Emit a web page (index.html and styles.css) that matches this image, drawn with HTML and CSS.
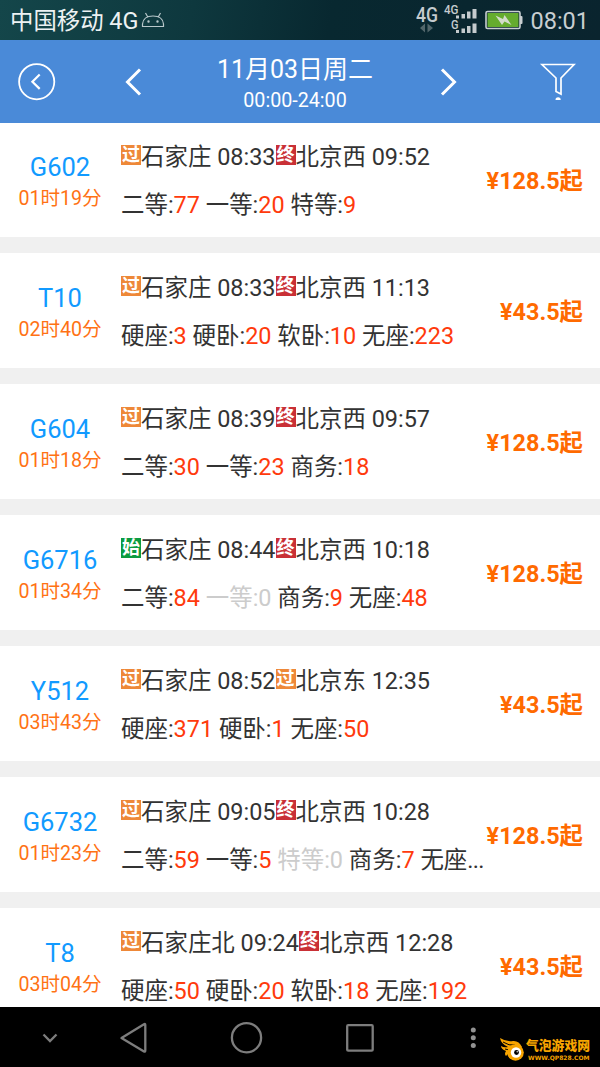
FILE: index.html
```
<!DOCTYPE html>
<html lang="zh-CN">
<head>
<meta charset="utf-8">
<title>车次列表</title>
<link rel="stylesheet" href="styles.css">
</head>
<body>
<div class="screen">
  <div class="status">
    <span class="carrier">中国移动 4G</span>
    <svg class="droid" width="24" height="18" viewBox="0 0 24 18" fill="none" stroke="#b9c8cb" stroke-width="1.2"><path d="M1.500 15.500V13C2 8 6 5 12 5S22 8 22.500 13V15.500ZM6.500 5.500L4.500 2M17.500 5.500L19.500 2"/><circle cx="7.500" cy="10.500" r=".6"/><circle cx="16.500" cy="10.500" r=".6"/></svg>
    <svg class="signal" width="64" height="40" viewBox="0 0 64 40" fill="#c5cbce">
      <g font-family="Roboto, sans-serif" font-weight="500"><text x="1" y="22" font-size="20" textLength="22" lengthAdjust="spacingAndGlyphs">4G</text><text x="29" y="14" font-size="12" textLength="14.500" lengthAdjust="spacingAndGlyphs">4G</text><text x="36" y="28.500" font-size="12" textLength="7.500" lengthAdjust="spacingAndGlyphs">G</text></g>
      <path fill="#52666b" d="M5 28L10 23.500V32.500ZM12.500 23.500V32.500L18 28Z"/>
      <path d="M41 15.500h3v3h-3zM46.500 14h3.500v4.500h-3.500zM52 11.500h3.500v7H52zM57.500 9H61.500v9.500h-4zM41 30h3v3h-3zM46.500 28.500h3.500v4.500h-3.500zM52 26h3.500v7H52zM57.500 23.500H61.500V33h-4z"/>
    </svg>
    <svg class="battery" width="38" height="20" viewBox="0 0 38 20"><rect x="1" y="1.500" width="34" height="17" rx="1.500" fill="#0b2730" stroke="#c8ced0" stroke-width="1.600"/><rect x="2.500" y="3" width="31" height="14" fill="#65ac2e"/><path d="M35 6h1.500q1 0 1 1v6q0 1-1 1H35z" fill="#c8ced0"/><path d="M10.500 5.500L18 9L19.500 5L26.500 15L19.500 11.500L17 15Z" fill="#d3dccb"/></svg>
    <span class="clock">08:01</span>
  </div>

  <div class="header">
    <svg class="back" width="38" height="38" viewBox="0 0 38 38" fill="none" stroke="#fff"><circle cx="18.700" cy="18.700" r="17.600" stroke-width="1.800"/><path d="M21.700 11.500L14.400 18.700L21.700 25.900" stroke-width="2.200"/></svg>
    <svg class="prev" width="18" height="28" viewBox="0 0 18 28" fill="none" stroke="#fff" stroke-width="3"><path d="M16 1.500L3.500 14L16 26.500"/></svg>
    <div class="date"><div class="day">11月03日周二</div><div class="hours">00:00-24:00</div></div>
    <svg class="next" width="18" height="28" viewBox="0 0 18 28" fill="none" stroke="#fff" stroke-width="3"><path d="M2 1.500L14.500 14L2 26.500"/></svg>
    <svg class="filter" width="38" height="40" viewBox="0 0 38 40" fill="none" stroke="#fff" stroke-width="1.700"><path d="M3 2.500H35L22 16V32L17 29.500V16Z"/><path d="M16.500 38Q16.500 35.300 19.100 35.300T21.700 38Z" fill="#fff" stroke="none"/></svg>
  </div>

  <div class="list">
    <div class="train">
      <div class="id"><div class="code">G602</div><div class="duration">01时19分</div></div>
      <div class="info"><div class="route"><i class="tag pass">过</i>石家庄 08:33<i class="tag end">终</i>北京西 09:52</div><div class="seats">二等:<b>77</b> 一等:<b>20</b> 特等:<b>9</b></div></div>
      <div class="price">¥128.5起</div>
    </div>
    <div class="train">
      <div class="id"><div class="code">T10</div><div class="duration">02时40分</div></div>
      <div class="info"><div class="route"><i class="tag pass">过</i>石家庄 08:33<i class="tag end">终</i>北京西 11:13</div><div class="seats">硬座:<b>3</b> 硬卧:<b>20</b> 软卧:<b>10</b> 无座:<b>223</b></div></div>
      <div class="price">¥43.5起</div>
    </div>
    <div class="train">
      <div class="id"><div class="code">G604</div><div class="duration">01时18分</div></div>
      <div class="info"><div class="route"><i class="tag pass">过</i>石家庄 08:39<i class="tag end">终</i>北京西 09:57</div><div class="seats">二等:<b>30</b> 一等:<b>23</b> 商务:<b>18</b></div></div>
      <div class="price">¥128.5起</div>
    </div>
    <div class="train">
      <div class="id"><div class="code">G6716</div><div class="duration">01时34分</div></div>
      <div class="info"><div class="route"><i class="tag start">始</i>石家庄 08:44<i class="tag end">终</i>北京西 10:18</div><div class="seats">二等:<b>84</b> <span class="none">一等:0</span> 商务:<b>9</b> 无座:<b>48</b></div></div>
      <div class="price">¥128.5起</div>
    </div>
    <div class="train">
      <div class="id"><div class="code">Y512</div><div class="duration">03时43分</div></div>
      <div class="info"><div class="route"><i class="tag pass">过</i>石家庄 08:52<i class="tag pass">过</i>北京东 12:35</div><div class="seats">硬座:<b>371</b> 硬卧:<b>1</b> 无座:<b>50</b></div></div>
      <div class="price">¥43.5起</div>
    </div>
    <div class="train">
      <div class="id"><div class="code">G6732</div><div class="duration">01时23分</div></div>
      <div class="info"><div class="route"><i class="tag pass">过</i>石家庄 09:05<i class="tag end">终</i>北京西 10:28</div><div class="seats">二等:<b>59</b> 一等:<b>5</b> <span class="none">特等:0</span> 商务:<b>7</b> 无座<span class="dots">...</span></div></div>
      <div class="price">¥128.5起</div>
    </div>
    <div class="train">
      <div class="id"><div class="code">T8</div><div class="duration">03时04分</div></div>
      <div class="info"><div class="route"><i class="tag pass">过</i>石家庄北 09:24<i class="tag end">终</i>北京西 12:28</div><div class="seats">硬座:<b>50</b> 硬卧:<b>20</b> 软卧:<b>18</b> 无座:<b>192</b></div></div>
      <div class="price">¥43.5起</div>
    </div>
  </div>

  <div class="nav">
    <svg width="490" height="60" viewBox="0 0 490 60" fill="none" stroke="#7d7d7d" stroke-width="2.300"><path d="M43.500 27.500L50 34L56.500 27.500"/><path d="M121.500 31L144 17.300Q145.300 16.500 145.300 18V43.500Q145.300 45.200 144 44.400Z" stroke-linejoin="round"/><circle cx="246.500" cy="30.700" r="14.600"/><rect x="347.200" y="18.200" width="25.500" height="25.500" rx="1"/><g fill="#929292" stroke="none"><circle cx="473.300" cy="23" r="2.500"/><circle cx="473.300" cy="30.700" r="2.500"/><circle cx="473.300" cy="38.500" r="2.500"/></g></svg>
    <div class="brand">
      <svg width="27" height="25" viewBox="0 0 27 25"><path fill="#f7a400" d="M1 1Q7 5 14 4Q20 3.500 23 10L17 13Q10 15 7 19Q5 17 7 14Q2 12 2 9Q5 11 9 10Q2 7 1 1Z"/><path d="M4 5Q10 9 16 8M6 12Q9 14 13 11" fill="none" stroke="#000"/><circle cx="16.500" cy="15.500" r="8.300" fill="#f7a400"/><circle cx="17" cy="15.500" r="5.200" fill="#fff"/><circle cx="17.500" cy="15.500" r="2.400" fill="#000"/><circle cx="18.200" cy="14.700" r=".7" fill="#fff"/></svg>
      <div class="words"><div class="name">气泡游戏网</div><svg width="64" height="8" viewBox="0 0 64 8"><text x="2" y="4.500" font-family="DejaVu Sans, sans-serif" font-weight="700" font-size="6" fill="#f7a400" textLength="61.500" lengthAdjust="spacingAndGlyphs">WWW.QP828.COM</text></svg></div>
    </div>
  </div>
</div>
</body>
</html>
```
FILE: styles.css
```
* { box-sizing: border-box; }
body { margin: 0; }
svg { display: block; flex: none; }
.screen { width: 600px; height: 1067px; overflow: hidden; display: flex; flex-direction: column; background: #f0f0f0; font-family: Roboto, "Noto Sans CJK SC", sans-serif; white-space: nowrap; }
.status { height: 40px; flex: none; display: flex; align-items: center; padding: 0 11px 0 10px; color: #c8ced1; background: linear-gradient(100deg, #14464a 0%, #0e383e 32%, #082830 55%, #0a242e 100%); }
.carrier { font-size: 23.400px; line-height: 40px; color: #edf2f3; padding-top: 2px; }
.droid { margin-left: 3px; }
.signal { margin-left: auto; }
.battery { margin-left: 6px; }
.clock { font-size: 23.500px; line-height: 40px; margin-left: 7px; padding-top: 2px; }
.header { height: 83px; flex: none; display: flex; align-items: center; color: #fff; background: #4a8ad8; padding: 0 23px 0 18px; }
.prev { margin-left: 68px; }
.date { width: 298px; padding: 5px 0 0 8px; text-align: center; }
.day { font-size: 25px; line-height: 34px; }
.hours { font-size: 19.700px; line-height: 28px; }
.filter { margin-left: auto; }
.list { height: 884px; flex: none; overflow: hidden; display: flex; flex-direction: column; gap: 16px; }
.train { height: 115px; flex: none; display: flex; align-items: center; padding-top: 2px; background: #fff; }
.train:first-child { height: 114px; padding-top: 1px; }
.id { width: 120px; text-align: center; padding-top: 3px; }
.code { font-size: 25.500px; line-height: 32px; color: #119aff; }
.duration { font-size: 19.600px; line-height: 31px; color: #ff7214; }
.info { width: 363px; padding-left: 1px; color: #333; font-size: 23.450px; }
.route { display: flex; align-items: center; height: 48px; padding-bottom: 3px; white-space: pre; }
.tag { width: 20px; height: 20px; flex: none; display: flex; align-items: center; justify-content: center; color: #fff; font-size: 18px; line-height: 20px; font-style: normal; font-weight: 700; overflow: hidden; }
.pass { background: #ee8838; }
.end { background: #c93036; }
.start { background: #0c9b40; }
.seats { height: 48px; line-height: 49px; }
.seats b { font-weight: 400; color: #ff3a0c; }
.none { color: #ccc; }
.dots { letter-spacing: -0.7px; }
.price { flex: 1; text-align: right; padding: 0 17px 3px 0; font-size: 23.400px; font-weight: 700; color: #ff6a00; }
.nav { height: 60px; flex: none; display: flex; background: #000; }
.brand { display: flex; margin: 30px 0 0 9px; }
.words { display: flex; flex-direction: column; }
.name { font-size: 12.800px; line-height: 17px; font-weight: 900; color: #f7a400; height: 18px; }
```
